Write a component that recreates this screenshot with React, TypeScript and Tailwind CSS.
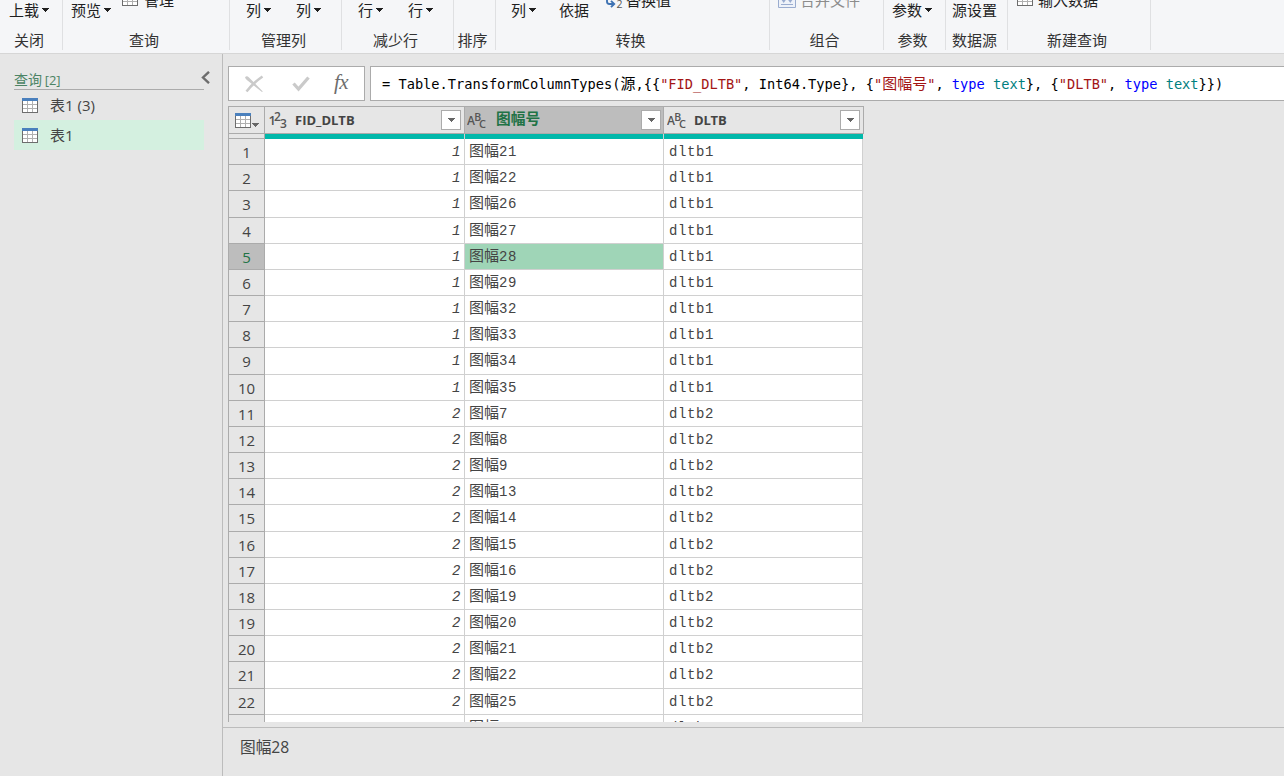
// Query editor: ribbon, query list, formula bar, data preview and status line.

import type { ReactNode } from "react";

type Row = { fid: number; sheet: string; dltb: string };

const SHEETS_1 = [21, 22, 26, 27, 28, 29, 32, 33, 34, 35];
const SHEETS_2 = [7, 8, 9, 13, 14, 15, 16, 19, 20, 21, 22, 25, 26];

const ROWS: Row[] = [
  ...SHEETS_1.map((n) => ({ fid: 1, sheet: `${n}`, dltb: "dltb1" })),
  ...SHEETS_2.map((n) => ({ fid: 2, sheet: `${n}`, dltb: "dltb2" })),
];

const SELECTED_ROW = 4;

function Caret({ className = "" }: { className?: string }) {
  return (
    <svg viewBox="0 0 7 4" className={`h-1 w-[7px] shrink-0 ${className}`} shapeRendering="crispEdges">
      <path d="M0 0h7L3.5 4z" fill="currentColor" />
    </svg>
  );
}

function TableIcon({ plain = false, className = "" }: { plain?: boolean; className?: string }) {
  return (
    <svg viewBox="0 0 16 15" className={`h-[15px] w-4 shrink-0 ${className}`} shapeRendering="crispEdges">
      <rect width="16" height="15" fill="#6d6d6d" />
      <rect x="1" y="3" width="14" height="11" fill="#b0b0b0" />
      {[3, 7, 11].map((y) =>
        [1, 6, 11].map((x) => (
          <rect key={`${x}-${y}`} x={x} y={y} width="4" height="3" fill="#fff" />
        )),
      )}
      {!plain && <rect width="16" height="3" fill="#4a80bd" />}
    </svg>
  );
}

function ReplaceIcon() {
  return (
    <svg viewBox="0 0 17 12" className="h-3 w-[17px] shrink-0">
      <path d="M1 0v1.500Q1 4 3.500 4H8M5 .8 8.200 4 5 7.200" fill="none" stroke="#3f73b3" strokeWidth="1.9" />
      <text x="10.5" y="8" fontSize="10.5" fill="#555" fontFamily="Open Sans, sans-serif">2</text>
    </svg>
  );
}

function CombineIcon() {
  return (
    <svg viewBox="0 0 18 12" className="h-3 w-[18px] shrink-0">
      <path d="M.5 0v8.500h17V0" fill="#eef2f9" stroke="#9aaccf" />
      <path d="M3 0h5.500L5.700 4zM9.500 0H15l-2.700 4z" fill="#9aaccf" />
      <path d="M3 5.500h12" stroke="#9aaccf" />
    </svg>
  );
}

function TypeNumber() {
  return (
    <svg viewBox="0 0 18 19" className="h-[19px] w-[18px] shrink-0" fill="#555" fontFamily="Open Sans, sans-serif" fontWeight="600">
      <text x="-0.500" y="14" fontSize="13">1</text>
      <text x="5" y="10" fontSize="12">2</text>
      <text x="11" y="17" fontSize="12">3</text>
    </svg>
  );
}

function TypeText() {
  return (
    <svg viewBox="0 0 19 19" className="h-[19px] w-[19px] shrink-0" fill="#555" fontFamily="Open Sans, sans-serif" fontWeight="600">
      <text x="0" y="13.500" fontSize="12">A</text>
      <text x="7.300" y="9.500" fontSize="10.500">B</text>
      <text x="12" y="17" fontSize="11">C</text>
    </svg>
  );
}

function Group({ label, className, children }: { label: string; className: string; children?: ReactNode }) {
  return (
    <div className={`flex h-[50px] shrink-0 flex-col border-r border-[#dfe0e2] ${className}`}>
      <div className="flex h-[30px] items-start leading-5 whitespace-nowrap text-[#1f1f1f]">{children}</div>
      <div className="pr-1 text-center leading-5 whitespace-nowrap text-[#333]">{label}</div>
    </div>
  );
}

function MenuItem({ text, className = "" }: { text: string; className?: string }) {
  return (
    <span className={`flex items-start gap-[3px] ${className}`}>
      {text}
      <Caret className="mt-2" />
    </span>
  );
}

function Ribbon() {
  return (
    <header className="flex h-[54px] shrink-0 overflow-hidden border-b border-[#d6d6d6] bg-[#f5f6f8] text-[15px]">
      <Group label="关闭" className="w-[63px]">
        <MenuItem text="上载" className="ml-[9px]" />
      </Group>
      <Group label="查询" className="w-[167px]">
        <MenuItem text="预览" className="ml-2" />
        <TableIcon plain className="-mt-[9px] ml-[11px]" />
        <span className="-mt-[10px] ml-[6px]">管理</span>
      </Group>
      <Group label="管理列" className="w-[112px]">
        <MenuItem text="列" className="ml-4" />
        <MenuItem text="列" className="ml-[25px]" />
      </Group>
      <Group label="减少行" className="w-[112px]">
        <MenuItem text="行" className="ml-4" />
        <MenuItem text="行" className="ml-[25px]" />
      </Group>
      <Group label="排序" className="w-[42px]" />
      <Group label="转换" className="w-[274px]">
        <MenuItem text="列" className="ml-[15px]" />
        <span className="ml-[23px]">依据</span>
        <span className="ml-[17px]">
          <ReplaceIcon />
        </span>
        <span className="-mt-[10px] ml-[3px]">替换值</span>
      </Group>
      <Group label="组合" className="w-[114px]">
        <span className="-mt-px ml-2">
          <CombineIcon />
        </span>
        <span className="-mt-[10px] ml-1 text-[#8c8c8c]">合并文件</span>
      </Group>
      <Group label="参数" className="w-[62px]">
        <MenuItem text="参数" className="ml-2" />
      </Group>
      <Group label="数据源" className="w-[62px]">
        <span className="ml-[6px]">源设置</span>
      </Group>
      <Group label="新建查询" className="w-[143px]">
        <TableIcon plain className="-mt-[9px] ml-[9px]" />
        <span className="-mt-[10px] ml-[5px]">输入数据</span>
      </Group>
    </header>
  );
}

function Sidebar() {
  return (
    <aside className="w-[223px] shrink-0 border-r border-[#bcbcbc] pl-[14px]">
      <div className="flex h-9 w-[200px] items-start">
        <h2 className="mt-4 h-5 w-[190px] border-b border-[#ababab] text-sm leading-5 text-[#4c8465]">
          查询 <span className="-ml-px text-[13px]">[2]</span>
        </h2>
        <svg viewBox="0 0 9 13" className="mt-[17px] -ml-[3px] h-[13px] w-[9px] shrink-0">
          <path d="M8 .8 2 6.500 8 12.200" fill="none" stroke="#6d6d6d" strokeWidth="2.400" />
        </svg>
      </div>
      <ul className="w-[190px] text-[15px] text-[#444]">
        <li className="flex h-[30px] items-center gap-3 pl-2">
          <TableIcon />
          表1 (3)
        </li>
        <li className="flex h-[30px] items-center gap-3 bg-[#d4f0e0] pl-2">
          <TableIcon />
          表1
        </li>
      </ul>
    </aside>
  );
}

function FormulaBar() {
  return (
    <div className="flex h-[35px] gap-[5px]">
      <div className="flex w-[137px] shrink-0 items-center border border-[#ababab] bg-white pl-[15px]">
        <svg viewBox="0 0 20 18" className="h-[18px] w-5">
          <path d="M1 2.500Q2.500 0 5 2.500L18.800 16.500 18 17 3.500 5.500Q1.500 4 1 2.500z" fill="#cacaca" />
          <path d="M18.500 1.500Q9 8 2.500 16.500" fill="none" stroke="#cacaca" strokeWidth="2.500" />
        </svg>
        <svg viewBox="0 0 18 16" className="ml-7 h-4 w-[18px]">
          <path d="M1.500 7.500 6.500 13 16.500 1.500" fill="none" stroke="#cacaca" strokeWidth="3.300" />
        </svg>
        <span className="-mt-[2px] ml-6 font-['Liberation_Serif',serif] text-[21px] leading-none tracking-[-0.5px] text-[#6d6d6d] italic">
          fx
        </span>
      </div>
      <div className="flex min-w-0 grow items-center overflow-hidden border border-r-0 border-[#ababab] bg-white pl-[11px]">
        <code className="font-['DejaVu_Sans_Mono','Noto_Sans_CJK_SC',monospace] text-[13.66px] leading-5 whitespace-pre text-black">
          {"= Table.TransformColumnTypes("}
          <span className="text-[15px] leading-none">源</span>
          {",{{"}
          <span className="text-[#a31515]">"FID_DLTB"</span>
          {", Int64.Type}, {"}
          <span className="text-[#a31515]">
            "<span className="text-[15px] leading-none">图幅号</span>"
          </span>
          {", "}
          <span className="text-[#0000ff]">type</span> <span className="text-[#008080]">text</span>
          {"}, {"}
          <span className="text-[#a31515]">"DLTB"</span>
          {", "}
          <span className="text-[#0000ff]">type</span> <span className="text-[#008080]">text</span>
          {"}})"}
        </code>
      </div>
    </div>
  );
}

function ColumnHead({ icon, className, children }: { icon: ReactNode; className: string; children: ReactNode }) {
  return (
    <div className={`flex h-full shrink-0 items-center border-r border-[#ababab] ${className}`}>
      {icon}
      {children}
      <span className="ml-auto flex size-5 items-center justify-center border border-[#ababab] bg-white text-[#666]">
        <Caret className="w-2" />
      </span>
    </div>
  );
}

function Preview() {
  return (
    <div className="h-[616px] w-[636px] overflow-hidden border-l border-[#ababab]">
      <div className="flex h-7 border-y border-[#ababab]">
        <div className="flex w-9 shrink-0 items-center border-r border-[#ababab] pl-[6px]">
          <TableIcon />
          <Caret className="mt-[9px] ml-px text-[#666]" />
        </div>
        <ColumnHead icon={<TypeNumber />} className="w-[200px] pr-[3px] pl-1">
          <b className="mt-[2px] ml-2 text-[13px] text-[#444]">FID_DLTB</b>
        </ColumnHead>
        <ColumnHead icon={<TypeText />} className="w-[199px] bg-[#bdbdbd] pr-[2px] pl-[2px]">
          <b className="-mt-1 ml-[10px] text-[14.7px] text-[#217346]">图幅号</b>
        </ColumnHead>
        <ColumnHead icon={<TypeText />} className="w-[200px] pr-[3px] pl-[3px]">
          <b className="mt-[2px] ml-2 text-[13px] tracking-[-0.2px] text-[#444]">DLTB</b>
        </ColumnHead>
      </div>
      <div className="flex h-[5px]">
        <div className="w-9 border-r border-b border-[#ababab]" />
        <div className="w-[200px] border-r border-[#d0d0d0] bg-[#01b8aa]" />
        <div className="w-[199px] border-r border-[#d0d0d0] bg-[#01b8aa]" />
        <div className="w-[199px] bg-[#01b8aa]" />
      </div>
      {ROWS.map((row, i) => {
        const selected = i === SELECTED_ROW;
        return (
          <div key={i} className="flex h-[26.18px] text-[14px] leading-[26px] tracking-[0.6px] text-[#444]">
            <div
              className={`w-9 shrink-0 border-r border-b border-[#ababab] text-center text-[15px] tracking-normal ${
                selected ? "bg-[#bdbdbd] text-[#217346]" : ""
              }`}
            >
              {i + 1}
            </div>
            <div className="w-[200px] shrink-0 border-r border-b border-[#d0d0d0] bg-white pr-[3px] text-right font-['Liberation_Mono',monospace] italic">
              {row.fid}
            </div>
            <div
              className={`w-[199px] shrink-0 border-r border-b border-[#d0d0d0] pl-1 font-['Liberation_Mono','Noto_Sans_CJK_SC',monospace] ${
                selected ? "bg-[#9fd5b7]" : "bg-white"
              }`}
            >
              <span className="text-[15px] leading-none tracking-normal">图幅</span>
              {row.sheet}
            </div>
            <div className="w-[199px] shrink-0 border-r border-b border-[#d0d0d0] bg-white pl-[5px] font-['Liberation_Mono',monospace]">
              {row.dltb}
            </div>
          </div>
        );
      })}
    </div>
  );
}

export default function App() {
  return (
    <div className="flex h-[776px] w-[1284px] flex-col overflow-hidden bg-[#e6e6e6] font-['Open_Sans','Noto_Sans_CJK_SC',sans-serif]">
      <Ribbon />
      <div className="flex min-h-0 grow">
        <Sidebar />
        <main className="flex min-w-0 grow flex-col">
          <div className="flex flex-col gap-[5px] pt-3 pl-[5px]">
            <FormulaBar />
            <Preview />
          </div>
          <footer className="mt-[5px] grow border-t border-[#bcbcbc] pt-[7px] pl-[17px] text-[15.7px] leading-6 text-[#444]">
            图幅28
          </footer>
        </main>
      </div>
    </div>
  );
}
